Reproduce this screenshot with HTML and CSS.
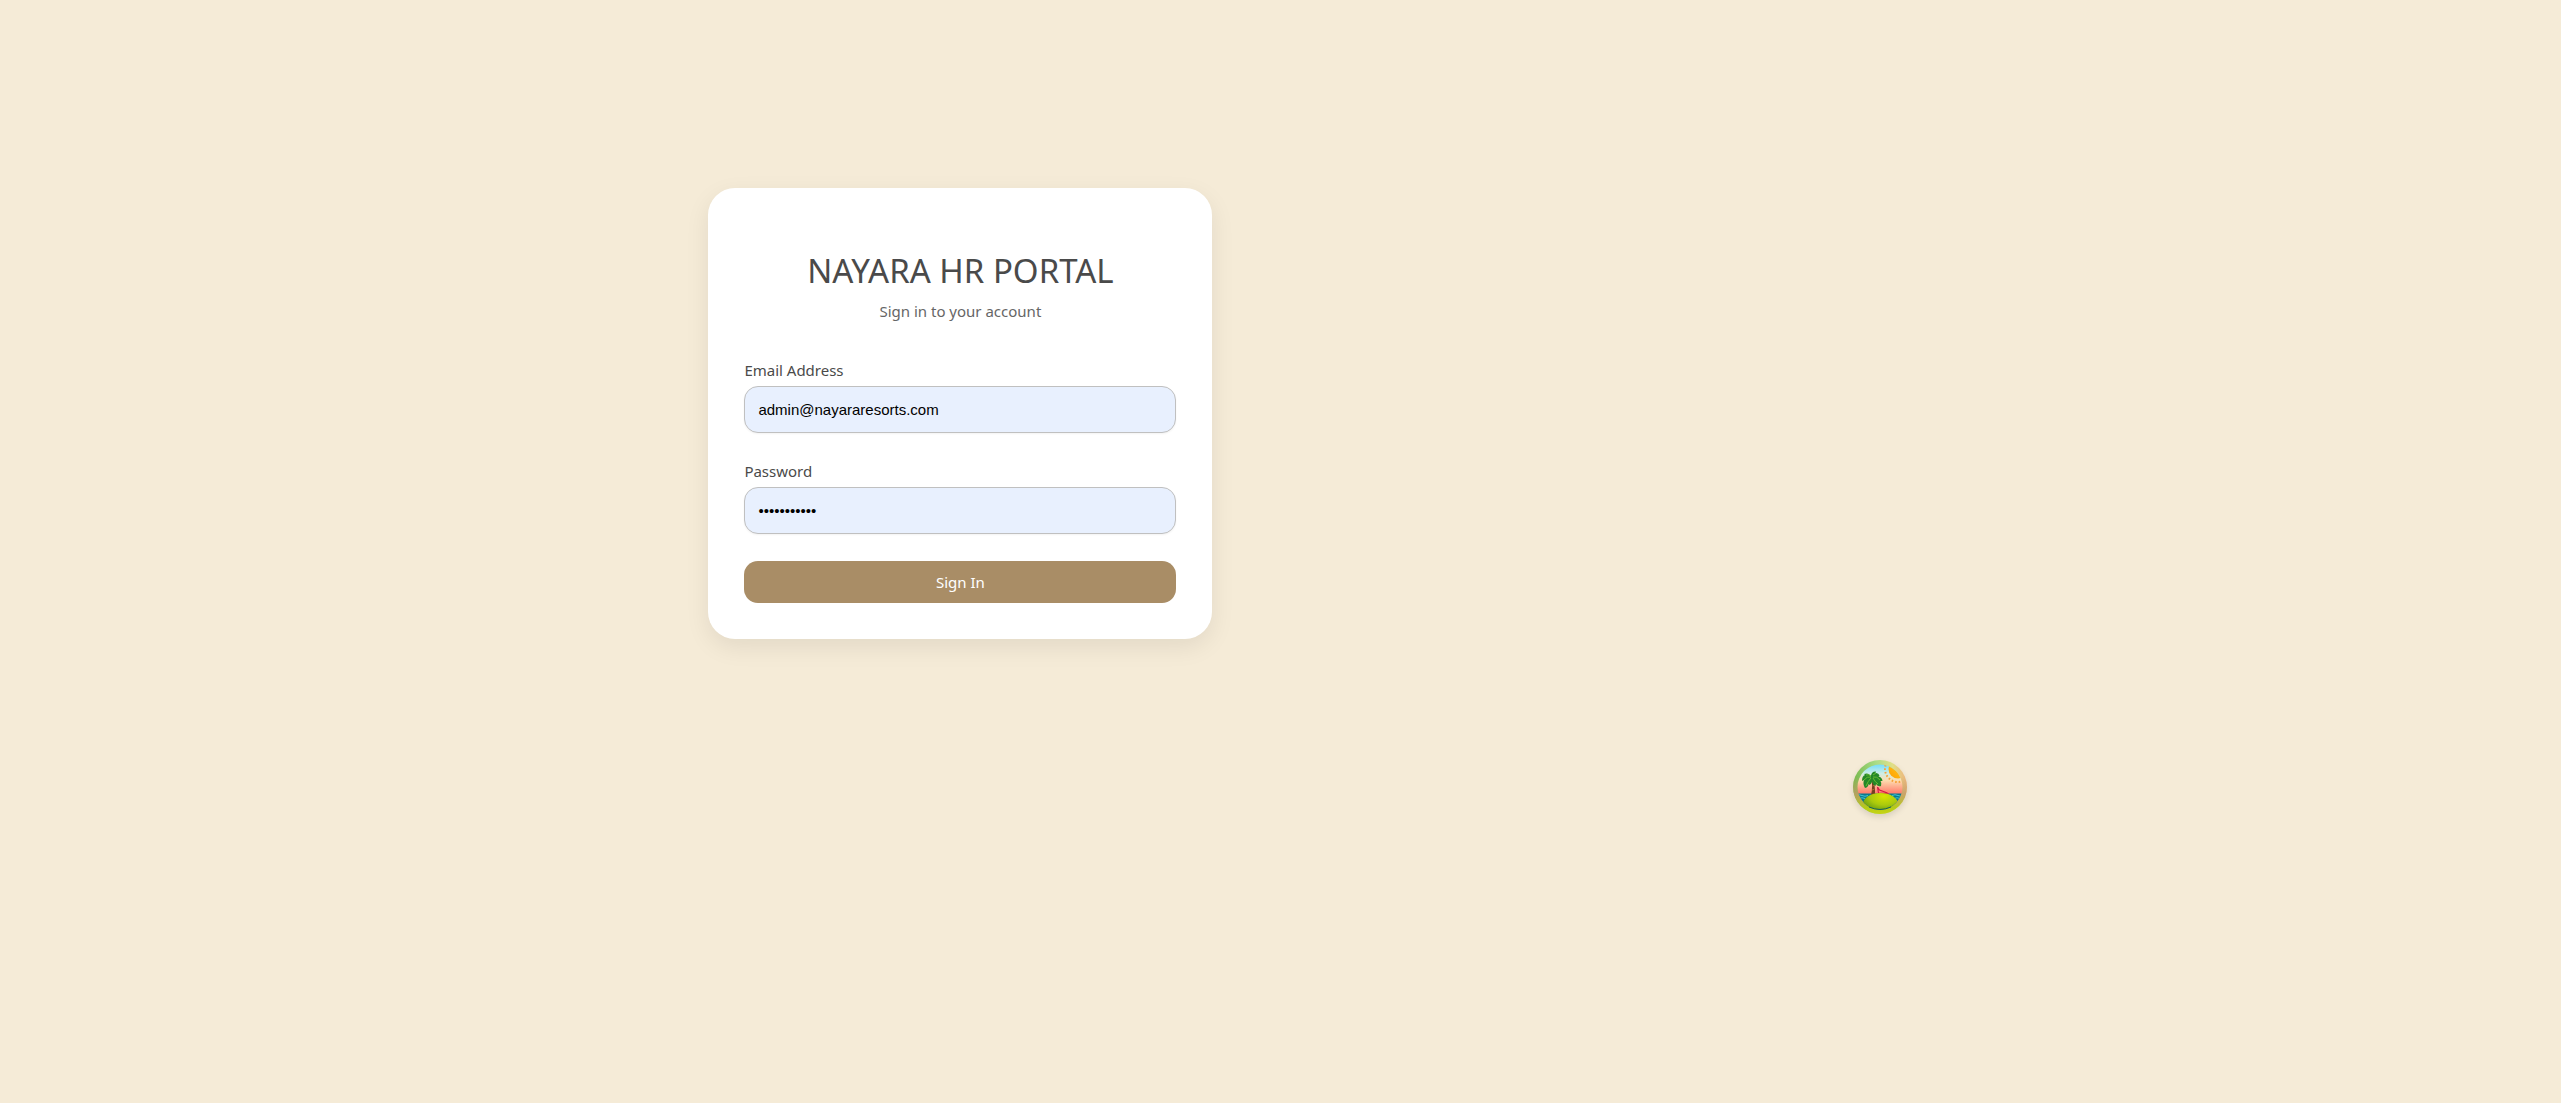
FILE: index.html
```html
<!DOCTYPE html>
<html lang="en">
<head>
<meta charset="utf-8">
<meta name="viewport" content="width=device-width, initial-scale=1">
<title>Nayara HR Portal</title>
<link rel="stylesheet" href="styles.css">
</head>
<body>
<main class="stage">
  <section class="card">
    <header class="card-header">
      <h1 class="title">NAYARA HR PORTAL</h1>
      <p class="subtitle">Sign in to your account</p>
    </header>
    <form class="form">
      <div class="field">
        <label for="email">Email Address</label>
        <input class="input" id="email" type="email" value="admin@nayararesorts.com">
      </div>
      <div class="field">
        <label for="password">Password</label>
        <input class="input" id="password" type="password" value="nayara12345">
      </div>
      <button class="submit" type="submit">Sign In</button>
    </form>
  </section>
  <button class="badge" type="button" aria-label="Island devtools">
    <svg viewBox="0 0 54 54" width="54" height="54" aria-hidden="true">
      <defs>
        <linearGradient id="ring" x1="0" y1="0.35" x2="1" y2="0.25">
          <stop offset="0" stop-color="#75b84b"/><stop offset=".45" stop-color="#a9dc87"/><stop offset=".75" stop-color="#e0df87"/><stop offset="1" stop-color="#efb17c"/>
        </linearGradient>
        <linearGradient id="ringLow" x1="0" y1="0" x2="0" y2="1">
          <stop offset=".3" stop-color="#c99f67" stop-opacity="0"/><stop offset=".62" stop-color="#c29b66" stop-opacity=".8"/><stop offset=".88" stop-color="#b5cb16"/><stop offset="1" stop-color="#c8d414"/>
        </linearGradient>
        <linearGradient id="sky" x1="0" y1="0" x2="0" y2="1">
          <stop offset=".08" stop-color="#73dcfa"/><stop offset=".25" stop-color="#cdeee6"/><stop offset=".38" stop-color="#fddcae"/><stop offset=".6" stop-color="#ff8270"/>
        </linearGradient>
        <radialGradient id="hill" cx=".6" cy=".15" r=".8">
          <stop offset="0" stop-color="#d9e400"/><stop offset=".5" stop-color="#aac90d"/><stop offset="1" stop-color="#4d8b13"/>
        </radialGradient>
        <linearGradient id="sun" x1="0" y1="1" x2="1" y2="0">
          <stop offset="0" stop-color="#ff9f00"/><stop offset="1" stop-color="#ffd62c"/>
        </linearGradient>
        <clipPath id="scene"><circle cx="27" cy="27" r="22.5"/></clipPath>
      </defs>
      <circle cx="27" cy="27" r="27" fill="url(#ring)"/>
      <circle cx="27" cy="27" r="27" fill="url(#ringLow)"/>
      <g clip-path="url(#scene)">
        <path fill="url(#sky)" d="M0 0h54v54H0z"/>
        <path fill="#08798d" d="M0 33.5h54V54H0z"/>
        <path d="M3 35.5q3-1.5 6 0t6 0M39 35.5q3-1.5 6 0t6 0M6 38.5q3-1.5 6 0M41 38.5q3-1.5 6 0" fill="none" stroke="#43c5d0"/>
        <circle cx="45" cy="9" r="13" fill="none" stroke="#f6a136" stroke-width="2" stroke-dasharray="1.6 2"/>
        <circle cx="45" cy="9" r="9.5" fill="url(#sun)"/>
        <path d="M19 17q3.5 7 3 18h-4q2.200-9 0-17z" fill="#754021"/>
        <path d="M19.200 22l1.800-.8M19.500 26l2-.8M19 30l2.500-.8" stroke="#b87434" stroke-width=".8"/>
        <path d="M18 17q-2-5-7-3l1 1q-3 1-3 6l2-1q-1.500 4 1 8 3.500-1 3.500-4l1 1q3-2 2.500-5 0 4 3.500 6l.5-2q2 3 5 2 1-3-.5-5l2 0q-.5-4-4-4.500l1-1q-1-3-4-2.500l.5-1.500q-4-.5-5 4z" fill="#248827"/>
        <path d="M18 17q-4-1-7 3M18 18q-3 3-5 8M20 17q4-1 7 3M20 18q2 4 5 6M18 16q-2-2-5-1M20 15l3-2" fill="none" stroke="#67bb31"/>
        <path d="M24.500 27l1 6 9.500.5.500 3.500M24.500 27l2 3 8 3M27 33l-1 4" fill="none" stroke="#d51c47" stroke-width="1.200"/>
        <ellipse cx="27.500" cy="44" rx="17.500" ry="11" fill="url(#hill)"/>
        <path d="M10 43q8 6 16 6t17-5l-3 9H15z" fill="#5c9711" opacity=".5"/>
      </g>
      <path d="M16 47q11 5 22 0" fill="none" stroke="#19635a"/>
    </svg>
  </button>
</main>
</body>
</html>
```
FILE: styles.css
```css
* {
  box-sizing: border-box;
}

body {
  margin: 0;
  background: #f5ebd7;
  color: #4a4a4a;
  font: 15px/23px "Noto Sans", sans-serif;
}

.stage {
  position: relative;
  display: flex;
  align-items: center;
  justify-content: center;
  width: 75%;
  min-height: 75vh;
}

.card {
  width: 100%;
  max-width: 504px;
  padding: 58px 36px 36px;
  border-radius: 27px;
  background: #fff;
  box-shadow: 0 8px 24px rgba(0, 0, 0, 0.08);
}

.card-header {
  margin-bottom: 36px;
  text-align: center;
}

.title {
  margin: 0 0 4px;
  font-size: 33px;
  line-height: 50px;
  font-weight: 400;
}

.subtitle {
  margin: 0;
  color: #666;
}

.form {
  display: flex;
  flex-direction: column;
  gap: 27px;
}

.field {
  display: flex;
  flex-direction: column;
  gap: 4px;
}

.input {
  width: 100%;
  height: 47px;
  padding: 0 13px;
  border: 1px solid #c0c0c0;
  border-radius: 14px;
  background: #e8f0fe;
  box-shadow: 0 1px 2px rgba(0, 0, 0, 0.05);
  color: #000;
  font: 15px "Liberation Sans", sans-serif;
}

.submit {
  height: 42px;
  padding: 0;
  border: 0;
  border-radius: 14px;
  background: #a98d66;
  color: #fff;
  font: inherit;
}

.badge {
  position: absolute;
  right: 14px;
  bottom: 13px;
  width: 54px;
  height: 54px;
  padding: 0;
  border: 0;
  border-radius: 50%;
  background: none;
  box-shadow: 0 3px 6px rgba(0, 0, 0, 0.12);
}

.badge svg {
  display: block;
}
```
